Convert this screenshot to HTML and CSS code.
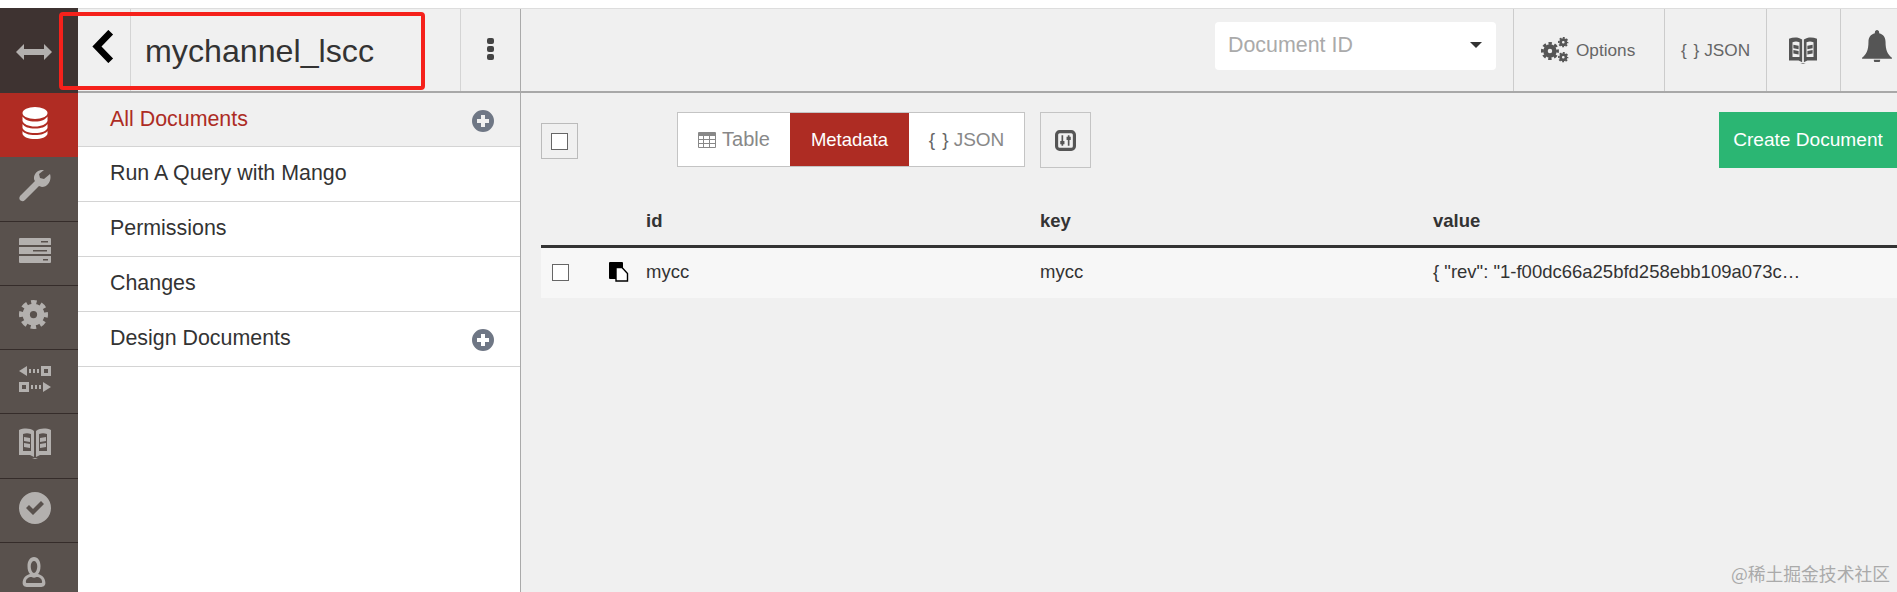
FILE: index.html
```html
<!DOCTYPE html>
<html lang="en">
<head>
  <meta charset="UTF-8">
  <title>mychannel_lscc - Fauxton</title>
  <link rel="stylesheet" href="styles.css">
</head>
<body>

  <!-- Main Sidebar -->
  <div class="sidebar">
    <div class="brand">
      <svg class="side-icon" viewBox="0 0 36 32"><path d="M0 16l8-8v5h20V8l8 8-8 8v-5H8v5z"/></svg>
    </div>
    <div class="side-item active">
      <svg class="side-icon db-icon" viewBox="0 0 32 32"><ellipse cx="16" cy="6" rx="12.5" ry="6"/><path d="M3.500 9.500c2 3 6 5 12.500 5s10.500-2 12.500-5v4.500c-1 3-6 5.500-12.500 5.500S4.500 17 3.500 14zM3.500 17c2 3 6 4.500 12.500 4.500s10.500-1.500 12.500-4.500v4c-1 3-6 5-12.500 5s-11.500-2-12.500-5zM3.500 24c2 2.500 6 4 12.500 4s10.500-1.500 12.500-4v3c-1 3-6 5-12.500 5s-11.500-2-12.500-5z"/></svg>
    </div>
    <div class="side-item">
      <svg class="side-icon" viewBox="0 0 32 32"><path d="M31 4l-6 5-4-1-1-4 5-4c-5-1-10 3-10 8 0 1 0 2 1 3L2 25c-2 2-2 4-1 5s3 2 5 0l14-14c1 0 2 1 3 1 6 0 10-7 8-13z"/></svg>
    </div>
    <div class="side-item">
      <svg class="side-icon" viewBox="0 0 32 32"><path fill-rule="evenodd" d="M0 4a1 1 0 0 1 1-1h30a1 1 0 0 1 1 1v6H0zm22 2v1.500h7V6zM0 12h32v7H0zm14 3v1.500h14V15zM0 21h32v6a1 1 0 0 1-1 1H1a1 1 0 0 1-1-1zm24 3v1.500h5V24z"/></svg>
    </div>
    <div class="side-item">
      <svg class="side-icon gear-icon" viewBox="0 0 32 32"><use href="#gear" width="32" height="32"/></svg>
    </div>
    <div class="side-item">
      <svg class="side-icon" viewBox="0 0 32 32"><path fill-rule="evenodd" d="M0 8l8-5v10zM10 6h2v4h-2zM14 6h2v4h-2zM18 6h2v4h-2zM22 3h10v10H22zm3 3v4h4V6zM0 19h10v10H0zm3 3v4h4v-4zM12 22h2v4h-2zM16 22h2v4h-2zM20 22h2v4h-2zM24 19l8 5-8 5z"/></svg>
    </div>
    <div class="side-item">
      <svg class="side-icon" viewBox="0 0 32 32"><use href="#book" width="32" height="32"/></svg>
    </div>
    <div class="side-item">
      <svg class="side-icon" viewBox="0 0 32 32"><path fill-rule="evenodd" d="M16 0a16 16 0 1 0 0 32 16 16 0 0 0 0-32zM7 16l3-3 4 4 8-8 3 3-11 11z"/></svg>
    </div>
    <div class="side-item">
      <svg class="side-icon user-icon" viewBox="0 0 32 32" preserveAspectRatio="none"><path fill-rule="evenodd" d="M16 1c-5 0-8 4-8 9 0 4 1 6 3 8-5 1-9 4-9 9 0 3 3 4 6 4h16c3 0 6-1 6-4 0-5-4-8-9-9 2-2 3-4 3-8 0-5-3-9-8-9zm0 4c2 0 4 2 4 5 0 4-2 7-4 7s-4-3-4-7c0-3 2-5 4-5zm-3 16c2 1 4 1 6 0 4 0 7 2 7 5 0 1-1 1-2 1H8c-1 0-2 0-2-1 0-3 3-5 7-5z"/></svg>
    </div>
  </div>

  <div class="content">

    <!-- Header Section -->
    <div class="topbar">
      <div class="crumbs">
        <div class="back">
          <svg class="back-icon" viewBox="0 0 20 30"><path d="M17 2L4.500 15 17 28"/></svg>
        </div>
        <div class="title">mychannel_lscc</div>
        <div class="dots"><span></span><span></span><span></span></div>
      </div>
      <div class="top-right">
        <div class="doc-select">
          <span>Document ID</span>
          <span class="caret"></span>
        </div>
        <div class="top-cell cell-options">
          <svg class="gears" viewBox="0 0 28 26"><use href="#gear" width="32" height="32" transform="translate(0 5) scale(.56)"/><use href="#gear" width="32" height="32" transform="translate(17 0) scale(.33)"/><use href="#gear" width="32" height="32" transform="translate(17 15) scale(.33)"/></svg>
          Options
        </div>
        <div class="top-cell cell-json"><span class="braces">{ }</span> JSON</div>
        <div class="top-cell cell-book">
          <svg class="dark-icon" viewBox="0 0 32 32"><use href="#book" width="32" height="32"/></svg>
        </div>
        <div class="top-cell cell-bell">
          <svg class="bell" viewBox="0 0 28 30"><path d="M14 0c-1 0-2 1-2 2v1C8 4 6 7 6 11c0 8-2 12-6 15v1h28v-1c-4-3-6-7-6-15 0-4-2-7-6-8V2c0-1-1-2-2-2zM11 28a3 3 0 0 0 6 0z"/></svg>
        </div>
      </div>
    </div>

    <div class="body-row">

      <!-- Database Nav -->
      <div class="nav">
        <div class="nav-row selected">All Documents <svg class="plus" viewBox="0 0 22 22"><use href="#plus" width="22" height="22"/></svg></div>
        <div class="nav-row">Run A Query with Mango</div>
        <div class="nav-row">Permissions</div>
        <div class="nav-row">Changes</div>
        <div class="nav-row">Design Documents <svg class="plus" viewBox="0 0 22 22"><use href="#plus" width="22" height="22"/></svg></div>
      </div>

      <div class="main">
        <div class="toolbar">
          <div class="check-btn"><span class="check"></span></div>
          <div class="layout-group">
            <div class="layout-btn btn-table">
              <svg class="table-icon" viewBox="0 0 18 16"><path fill-rule="evenodd" d="M1 0h16a1 1 0 0 1 1 1v14a1 1 0 0 1-1 1H1a1 1 0 0 1-1-1V1a1 1 0 0 1 1-1zm0 4v3h4V4zm5 0v3h5V4zm6 0v3h5V4zM1 8v3h4V8zm5 0v3h5V8zm6 0v3h5V8zM1 12v3h4v-3zm5 0v3h5v-3zm6 0v3h5v-3z"/></svg>
              Table
            </div>
            <div class="layout-btn btn-meta">Metadata</div>
            <div class="layout-btn btn-json"><span class="braces">{ }</span> JSON</div>
          </div>
          <div class="tune-btn">
            <svg class="tune" viewBox="0 0 20 20"><rect x="1.500" y="1.500" width="17" height="17" rx="3"/><path d="M7 5v10M13 5v10"/><path class="knob" d="M5 12h4M11 8h4"/></svg>
          </div>
          <div class="create-btn">Create Document</div>
        </div>

        <div class="doc-head">
          <div></div>
          <div>id</div>
          <div>key</div>
          <div>value</div>
        </div>
        <div class="doc-row">
          <div class="row-tools">
            <span class="check"></span>
            <svg class="doc-icon" viewBox="0 0 20 20"><path d="M1 0h12a1 1 0 0 1 1 1v16H1a1 1 0 0 1-1-1V1a1 1 0 0 1 1-1z"/><path class="sheet" d="M7 5.500h6l5.500 6v7.500H7z"/></svg>
          </div>
          <div>mycc</div>
          <div>mycc</div>
          <div>{ "rev": "1-f00dc66a25bfd258ebb109a073c…</div>
        </div>
      </div>
    </div>
  </div>

  <!-- red marker drawn over the screenshot -->
  <div class="marker"></div>
  <div class="watermark">@稀土掘金技术社区</div>

  <!-- Shared icons -->
  <svg class="sprite" viewBox="0 0 32 32">
    <symbol id="gear" viewBox="0 0 32 32">
      <circle class="gear-teeth" cx="16" cy="16" r="13.5"/>
      <circle class="gear-ring" cx="16" cy="16" r="8"/>
    </symbol>
    <symbol id="book" viewBox="0 0 32 32">
      <path fill-rule="evenodd" d="M0 3c5-2 11-2 15 1v26l-4-2H0zm32 0c-5-2-11-2-15 1v26l4-2h11zM4 7v17h8V7C9 6 7 6 4 7zm24 0v17h-8V7c3-1 5-1 8 0zM5 10l6 1v4l-6-1zm0 6l6 1v4l-6-1zm22-6l-6 1v4l6-1zm0 6l-6 1v4l6-1zM13 31h6l-3 1z"/>
    </symbol>
    <symbol id="plus" viewBox="0 0 22 22">
      <path fill-rule="evenodd" d="M11 0a11 11 0 1 0 0 22 11 11 0 0 0 0-22zM9 5h4v4h4v4h-4v4H9v-4H5V9h4z"/>
    </symbol>
  </svg>

</body>
</html>
```

FILE: styles.css
```css
/* Basic Styles */
* {
  margin: 0;
  padding: 0;
  box-sizing: border-box;
}

html, body {
  height: 592px;
  overflow: hidden;
}

body {
  display: flex;
  padding-top: 8px;
  background-color: #fff;
  color: #333;
  font-family: "Liberation Sans", Arial, sans-serif;
  font-size: 18.5px;
}

.sprite {
  display: none;
}

/* gear is two dashed/solid strokes, so it takes its colour from stroke */
.gear-teeth {
  fill: none;
  stroke: inherit;
  stroke-width: 5;
  stroke-dasharray: 6 4.6;
  stroke-dashoffset: 3;
}

.gear-ring {
  fill: none;
  stroke: inherit;
  stroke-width: 8;
}

/* Main Sidebar */
.sidebar {
  width: 78px;
  flex-shrink: 0;
  background-color: #59514d;
}

.brand {
  height: 85px;
  padding: 28px 0 0 16px;
  background-color: #3e3331;
}

.brand .side-icon {
  width: 36px;
  height: 32px;
}

.side-item {
  height: 64.3px;
  padding: 13px 0 0 19px;
  border-bottom: 1px solid #352c2a;
}

.side-item.active {
  background-color: #b02c23;
  border-bottom: none;
}

.side-icon {
  display: block;
  width: 32px;
  height: 32px;
  fill: #b3b0ae;
}

.active .side-icon {
  fill: #fff;
}

.side-icon.db-icon {
  margin-top: 1px;
}

.side-icon.gear-icon {
  width: 29px;
  height: 29px;
  margin-top: 1px;
  stroke: #b3b0ae;
}

.side-icon.user-icon {
  width: 26px;
  margin-left: 2px;
}

/* Header */
.content {
  flex: 1;
  display: flex;
  flex-direction: column;
  min-width: 0;
  background-color: #f0f0f0;
}

.topbar {
  height: 85px;
  flex-shrink: 0;
  display: flex;
  border-top: 1px solid #ddd;
  border-bottom: 2px solid #a8a8a8;
}

.crumbs {
  width: 443px;
  flex-shrink: 0;
  display: flex;
  border-right: 1px solid #aaa;
}

.back {
  width: 53px;
  padding: 21px 0 0 14px;
  border-right: 1px solid #d4d4d4;
}

.back-icon {
  display: block;
  width: 22px;
  height: 33px;
  fill: none;
  stroke: #000;
  stroke-width: 6;
}

.title {
  flex: 1;
  padding: 24px 0 0 14px;
  font-size: 32.2px;
  line-height: 36px;
}

.dots {
  width: 60px;
  padding: 29px 0 0 26px;
  border-left: 1px solid #d4d4d4;
}

.dots span {
  display: block;
  width: 7px;
  height: 6px;
  margin-bottom: 2px;
  border-radius: 2px;
  background-color: #444;
}

.top-right {
  flex: 1;
  display: flex;
  justify-content: flex-end;
}

.doc-select {
  width: 281px;
  height: 48px;
  margin: 13px 17px 0 0;
  padding: 0 14px 2px 13px;
  display: flex;
  align-items: center;
  justify-content: space-between;
  border-radius: 4px;
  background-color: #fff;
  color: #aaa;
  font-size: 21.4px;
}

.caret {
  border-top: 6px solid #333;
  border-left: 6px solid transparent;
  border-right: 6px solid transparent;
}

.top-cell {
  display: flex;
  align-items: center;
  border-left: 1px solid #ccc;
  color: #666;
  font-size: 17.2px;
}

.cell-options {
  width: 151px;
  padding-left: 27px;
  gap: 7px;
}

.cell-json {
  width: 102px;
  padding-left: 16px;
}

.cell-book {
  width: 74px;
  padding-left: 22px;
}

.cell-bell {
  width: 57px;
  padding-left: 21px;
}

.braces {
  margin-right: 4px;
  letter-spacing: 1px;
  color: #666;
}

.gears {
  width: 28px;
  height: 26px;
  stroke: #555;
}

.dark-icon {
  width: 28px;
  height: 28px;
  fill: #555;
}

.bell {
  width: 30px;
  height: 32px;
  margin-top: -8px;
  fill: #555;
}

/* Database Nav */
.body-row {
  flex: 1;
  display: flex;
  min-height: 0;
}

.nav {
  width: 443px;
  flex-shrink: 0;
  background-color: #fff;
  border-right: 1px solid #aaa;
}

.nav-row {
  height: 55px;
  padding: 0 26px 1px 32px;
  display: flex;
  align-items: center;
  justify-content: space-between;
  border-bottom: 1px solid #d4d4d4;
  font-size: 21.4px;
}

.nav-row.selected {
  height: 54px;
  background-color: #f0f0f0;
  color: #ad2c24;
}

.plus {
  width: 22px;
  height: 22px;
  margin-top: 3px;
  fill: #6f7785;
}

/* Documents */
.main {
  flex: 1;
  min-width: 0;
  padding: 19px 0 0 20px;
}

.toolbar {
  display: flex;
  align-items: flex-start;
  height: 56px;
}

.check-btn {
  width: 37px;
  height: 36px;
  margin-top: 11px;
  display: flex;
  align-items: center;
  justify-content: center;
  border: 1px solid #bbb;
}

.check {
  display: block;
  width: 17px;
  height: 17px;
  border: 1px solid #666;
  background-color: #fff;
}

.layout-group {
  height: 55px;
  margin-left: 99px;
  display: flex;
  border: 1px solid #c4c4c4;
  background-color: #fff;
  color: #888;
  font-size: 20px;
}

.layout-btn {
  display: flex;
  align-items: center;
  justify-content: center;
}

.btn-table {
  width: 112px;
  gap: 6px;
}

.btn-meta {
  width: 119px;
  background-color: #ae2c23;
  color: #fff;
  font-size: 18.5px;
}

.btn-json {
  width: 115px;
  font-size: 19px;
}

.table-icon {
  width: 18px;
  height: 16px;
  fill: #888;
}

.tune-btn {
  width: 51px;
  height: 56px;
  margin-left: 15px;
  display: flex;
  align-items: center;
  justify-content: center;
  border: 1px solid #c4c4c4;
}

.tune {
  width: 21px;
  height: 21px;
  fill: none;
  stroke: #555;
  stroke-width: 3;
}

.tune path {
  stroke-width: 1.6;
}

.tune .knob {
  stroke-width: 3;
}

.create-btn {
  width: 178px;
  height: 56px;
  margin-left: auto;
  display: flex;
  align-items: center;
  justify-content: center;
  background-color: #2bb673;
  color: #fff;
  font-size: 19.1px;
}

.doc-head,
.doc-row {
  display: grid;
  grid-template-columns: 105px 394px 393px 1fr;
  align-items: center;
}

.doc-head {
  height: 80px;
  padding-top: 28px;
  border-bottom: 3px solid #333;
  font-weight: bold;
}

.doc-row {
  height: 50px;
  padding-bottom: 2px;
  background-color: #f7f7f7;
}

.row-tools {
  display: flex;
  align-items: center;
  padding-left: 11px;
  gap: 40px;
}

.doc-icon {
  width: 20px;
  height: 20px;
  fill: #000;
}

.doc-icon .sheet {
  fill: #fff;
  stroke: #000;
  stroke-width: 1.4;
}

/* Overlays on the screenshot */
.marker {
  position: absolute;
  left: 59px;
  top: 12px;
  width: 366px;
  height: 78px;
  border: 4px solid #f5211b;
  border-radius: 4px;
}

.watermark {
  position: absolute;
  right: 7px;
  bottom: 9px;
  color: #aaa;
  font-family: "Noto Sans CJK SC", sans-serif;
  font-size: 17.8px;
  line-height: 20px;
}
```
